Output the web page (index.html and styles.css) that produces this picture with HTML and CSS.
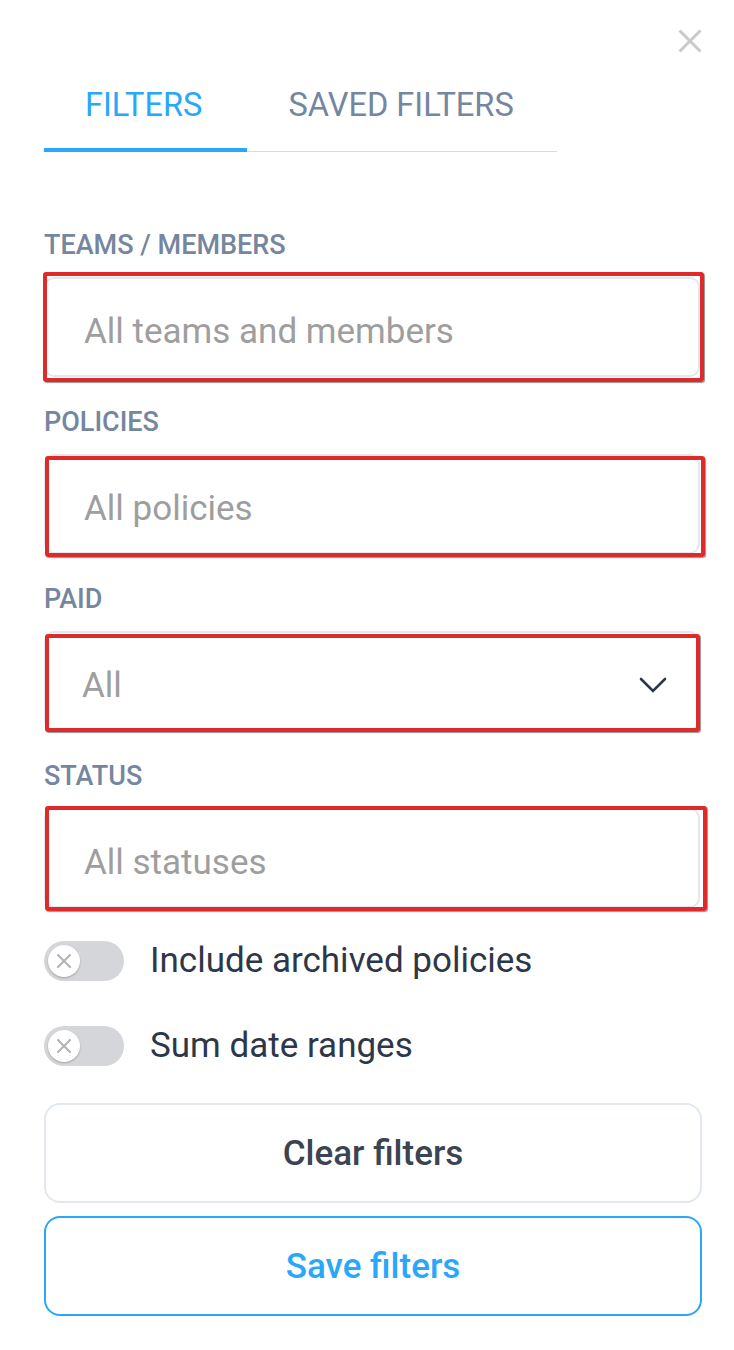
FILE: index.html
```html
<!DOCTYPE html>
<html lang="en">
<head>
  <meta charset="UTF-8">
  <meta name="viewport" content="width=device-width, initial-scale=1.0">
  <title>Filters</title>
  <link rel="stylesheet" href="styles.css">
</head>
<body>

  <div class="panel">

    <!-- close -->
    <div class="top">
      <button class="close" aria-label="Close">
        <svg width="24" height="24" viewBox="0 0 24 24">
          <path d="M1.5 1.5 L22.5 22.5 M22.5 1.5 L1.5 22.5" stroke="#c9c9c9" stroke-width="3" fill="none"/>
        </svg>
      </button>
    </div>

    <!-- tabs -->
    <div class="tabs">
      <div class="tab active">FILTERS</div>
      <div class="tab">SAVED FILTERS</div>
    </div>

    <!-- fields -->
    <div class="fields">
      <div class="field">
        <label>TEAMS / MEMBERS</label>
        <div class="box">
          <input type="text" placeholder="All teams and members">
          <span class="mark mark-1"></span>
        </div>
      </div>

      <div class="field">
        <label>POLICIES</label>
        <div class="box">
          <input type="text" placeholder="All policies">
          <span class="mark mark-2"></span>
        </div>
      </div>

      <div class="field">
        <label>PAID</label>
        <div class="box">
          <div class="select">
            <span>All</span>
            <svg width="28" height="18" viewBox="0 0 28 18">
              <path d="M2 3 L14 15 L26 3" stroke="#2d3748" stroke-width="2.6" fill="none" stroke-linecap="round"/>
            </svg>
          </div>
          <span class="mark mark-3"></span>
        </div>
      </div>

      <div class="field">
        <label>STATUS</label>
        <div class="box">
          <input type="text" placeholder="All statuses">
          <span class="mark mark-4"></span>
        </div>
      </div>
    </div>

    <!-- toggles -->
    <div class="toggles">
      <div class="toggle-row">
        <span class="switch">
          <span class="knob">
            <svg width="14" height="14" viewBox="0 0 14 14">
              <path d="M1 1 L13 13 M13 1 L1 13" stroke="#b5b5b5" stroke-width="2.2" fill="none" stroke-linecap="round"/>
            </svg>
          </span>
        </span>
        <span class="toggle-text">Include archived policies</span>
      </div>
      <div class="toggle-row">
        <span class="switch">
          <span class="knob">
            <svg width="14" height="14" viewBox="0 0 14 14">
              <path d="M1 1 L13 13 M13 1 L1 13" stroke="#b5b5b5" stroke-width="2.2" fill="none" stroke-linecap="round"/>
            </svg>
          </span>
        </span>
        <span class="toggle-text">Sum date ranges</span>
      </div>
    </div>

    <!-- buttons -->
    <div class="buttons">
      <button class="btn">Clear filters</button>
      <button class="btn btn-save">Save filters</button>
    </div>

  </div>

</body>
</html>
```

FILE: styles.css
```css
* {
  box-sizing: border-box;
}

body {
  font-family: 'Roboto', 'Liberation Sans', sans-serif;
  margin: 0;
  padding: 0;
  background-color: #fff;
}

.panel {
  width: 734px;
  padding: 0 32px 0 44px;
}

/* close */
.top {
  display: flex;
  justify-content: flex-end;
  padding-top: 29px;
}

.close {
  border: none;
  background: none;
  padding: 0;
  width: 24px;
  height: 24px;
  cursor: pointer;
}

.close svg {
  display: block;
}

/* tabs */
.tabs {
  display: flex;
  width: 513px;
  margin-top: 25px;
  border-bottom: 1px solid #cddcee;
}

.tab {
  flex-shrink: 0;
  white-space: nowrap;
  padding: 2px 41px 18px;
  font-size: 32.6px;
  line-height: 50px;
  color: #75869f;
  margin-bottom: -1px;
  border-bottom: 4px solid transparent;
}

.tab.active {
  padding-right: 45px;
  color: #29a7fa;
  border-bottom-color: #29a7fa;
}

/* fields */
.fields {
  margin-top: 79px;
}

.field {
  margin-bottom: 31px;
}

.field label {
  display: block;
  font-size: 27px;
  line-height: 28px;
  font-weight: 500;
  color: #75869f;
  margin-bottom: 18px;
}

.box {
  position: relative;
  width: 656px;
  height: 100px;
}

.box input,
.select {
  width: 100%;
  height: 100%;
  border: 2px solid #e3e8ef;
  border-radius: 10px;
  padding: 8px 38px 0;
  font-family: inherit;
  font-size: 35px;
  color: #2d3748;
  background: #fff;
  outline: none;
}

.box input::placeholder {
  color: #9e9e9e;
}

.select {
  display: flex;
  align-items: center;
  justify-content: space-between;
  padding: 8px 31px 0 36px;
  color: #9e9e9e;
}

.select svg {
  display: block;
}

/* red marks drawn over the inputs */
.mark {
  position: absolute;
  border: 4px solid #df2a2a;
  border-radius: 3px;
  box-shadow: 1px 1px 1px rgba(60, 60, 60, 0.55);
  pointer-events: none;
}

.mark-1 {
  left: -1px;
  top: -5px;
  width: 661px;
  height: 110px;
}

.mark-2 {
  left: 1px;
  top: 2px;
  width: 660px;
  height: 101px;
}

.mark-3 {
  left: 1px;
  top: 3px;
  width: 655px;
  height: 98px;
}

.mark-4 {
  left: 1px;
  top: -2px;
  width: 662px;
  height: 105px;
}

/* toggles */
.toggles {
  margin-top: 32px;
  display: flex;
  flex-direction: column;
  gap: 44px;
}

.toggle-row {
  display: flex;
  align-items: center;
  gap: 26px;
}

.switch {
  width: 80px;
  height: 40px;
  border-radius: 20px;
  background-color: #d5d6d9;
  padding: 4px;
  display: flex;
  align-items: center;
}

.knob {
  width: 32px;
  height: 32px;
  border-radius: 50%;
  background-color: #fff;
  box-shadow: 0 1px 2px rgba(0, 0, 0, 0.25);
  display: flex;
  align-items: center;
  justify-content: center;
}

.knob svg {
  display: block;
}

.toggle-text {
  font-size: 35px;
  color: #2d3748;
}

/* buttons */
.buttons {
  margin-top: 37px;
  display: flex;
  flex-direction: column;
  gap: 13px;
}

.btn {
  width: 658px;
  height: 100px;
  border: 2px solid #e3e8ef;
  border-radius: 16px;
  background-color: #fff;
  font-family: inherit;
  font-size: 35px;
  font-weight: 500;
  color: #3a4452;
  cursor: pointer;
}

.btn-save {
  border-color: #29a7fa;
  color: #29a7fa;
}
```
